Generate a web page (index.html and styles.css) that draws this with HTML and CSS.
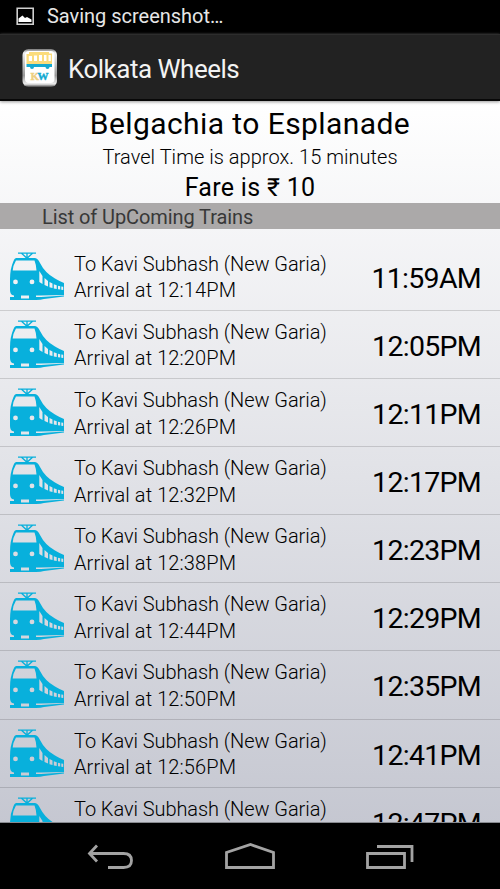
FILE: index.html
```html
<!DOCTYPE html>
<html lang="en">
<head>
<meta charset="utf-8">
<title>Kolkata Wheels</title>
<link rel="stylesheet" href="styles.css">
</head>
<body>
<svg class="defs" aria-hidden="true">
  <symbol id="train" viewBox="0 0 56 50">
    <path d="M8 1.2H26M11.5 1.2L17 6.3L22.5 1.2M17 1.2V6" fill="none" stroke="#08b0dc" stroke-width="1.3"/>
    <path fill="#08b0dc" fill-rule="evenodd" d="M6 6H25Q28 6.500 30 11Q35 21 45 26.500Q50 29.500 54 31V43L30 43.500H4Q0 43 0 38V27Q0 17 3.500 9Q4.300 6.500 6 6ZM6 8.500Q3 13.500 2.700 18.500H26.500Q26.300 13 24.500 8.500ZM5.500 27.500a2.400 2.400 0 1 0 0 4.800a2.400 2.400 0 1 0 0-4.800ZM22 27.500a2.400 2.400 0 1 0 0 4.800a2.400 2.400 0 1 0 0-4.800ZM29.300 19V30L32.500 32V24ZM34.500 26V33L38 34.500V29ZM39.500 30V35.300L42.500 36V31.500ZM43.800 32.300V36.500L46.700 37V33.300ZM48 33.800V37.300L50.200 37.600V34.200ZM51.300 34.500V37.800L53.200 38V34.800Z"/>
    <path fill="#08b0dc" d="M4 43H11V45H4ZM19 43H26V45H19ZM0 45H11V46.500H19V45H31L54 43.500V44.500L34 47Q31 48 26 48H0Z"/>
  </symbol>
</svg>
<div class="status">
  <svg class="status-icon" width="19" height="19" viewBox="0 0 19 19"><path d="M1.200 1.200H17.200V17.200H1.200Z" fill="none" stroke="#d0d0d0" stroke-width="1.600"/><path d="M2.500 15V11.500L6.500 8.500L9 11L11 10L15.500 12.500V15Z" fill="#fff"/></svg>
  <span class="status-text">Saving screenshot…</span>
</div>
<header class="bar">
  <svg class="app-icon" width="36" height="40" viewBox="0 0 36 40">
    <defs>
      <linearGradient id="chrome" x2="0" y2="1"><stop stop-color="#777"/><stop offset=".1" stop-color="#eee"/><stop offset=".7" stop-color="#999"/><stop offset=".92" stop-color="#eee"/><stop offset="1" stop-color="#444"/></linearGradient>
    </defs>
    <rect x=".5" y="1" width="34.500" height="38" rx="6" fill="url(#chrome)"/>
    <rect x="3" y="3" width="29.500" height="32" rx="4" fill="#fff"/>
    <path fill="#fbdc7c" fill-rule="evenodd" d="M7 4H27V5.500H30V16H4.500V6H7ZM6.800 8V13H10V8ZM12 7.500V13H15V7.500ZM17 7V13H20V7ZM22 7V13H24.500V7ZM26.500 7V13H28.800V7Z"/>
    <path fill="#15a9d1" d="M4.500 16H30V19H27.500A2 2 0 0 1 23.500 19H12A2 2 0 0 1 8 19H4.500Z"/>
    <text class="logo-k" x="8.500" y="32">K</text><text class="logo-w" x="15.500" y="32">W</text>
  </svg>
  <h1>Kolkata Wheels</h1>
</header>
<section class="summary">
  <div class="route">Belgachia to Esplanade</div>
  <div class="travel">Travel Time is approx. 15 minutes</div>
  <div class="fare">Fare is ₹ 10</div>
</section>
<div class="list-title"><span>List of UpComing Trains</span></div>
<ul class="trains">
  <li><svg class="train"><use href="#train"/></svg><div class="info"><p class="dest">To Kavi Subhash (New Garia)</p><p class="arr">Arrival at 12:14PM</p></div><time>11:59AM</time></li>
  <li><svg class="train"><use href="#train"/></svg><div class="info"><p class="dest">To Kavi Subhash (New Garia)</p><p class="arr">Arrival at 12:20PM</p></div><time>12:05PM</time></li>
  <li><svg class="train"><use href="#train"/></svg><div class="info"><p class="dest">To Kavi Subhash (New Garia)</p><p class="arr">Arrival at 12:26PM</p></div><time>12:11PM</time></li>
  <li><svg class="train"><use href="#train"/></svg><div class="info"><p class="dest">To Kavi Subhash (New Garia)</p><p class="arr">Arrival at 12:32PM</p></div><time>12:17PM</time></li>
  <li><svg class="train"><use href="#train"/></svg><div class="info"><p class="dest">To Kavi Subhash (New Garia)</p><p class="arr">Arrival at 12:38PM</p></div><time>12:23PM</time></li>
  <li><svg class="train"><use href="#train"/></svg><div class="info"><p class="dest">To Kavi Subhash (New Garia)</p><p class="arr">Arrival at 12:44PM</p></div><time>12:29PM</time></li>
  <li><svg class="train"><use href="#train"/></svg><div class="info"><p class="dest">To Kavi Subhash (New Garia)</p><p class="arr">Arrival at 12:50PM</p></div><time>12:35PM</time></li>
  <li><svg class="train"><use href="#train"/></svg><div class="info"><p class="dest">To Kavi Subhash (New Garia)</p><p class="arr">Arrival at 12:56PM</p></div><time>12:41PM</time></li>
  <li><svg class="train"><use href="#train"/></svg><div class="info"><p class="dest">To Kavi Subhash (New Garia)</p></div><time>12:47PM</time></li>
</ul>
<nav class="nav">
  <svg width="48" height="30" viewBox="0 0 48 30"><path d="M11 2.500L3.500 10.500L11 18.500M4 10.500H37.500Q45.500 10.500 45.500 17.500T37.500 24.500H22" fill="none" stroke="#a3a3a3" stroke-width="2.800"/></svg>
  <svg width="52" height="30" viewBox="0 0 52 30"><path d="M2.500 24.500V9.500L26.500 1.500L49.500 9.500V24.500Z" fill="none" stroke="#a3a3a3" stroke-width="2.800"/></svg>
  <svg width="50" height="30" viewBox="0 0 50 30"><path d="M2.500 10.500H39.500V24.500H2.500ZM12 3.500H47V19" fill="none" stroke="#a3a3a3" stroke-width="2.800"/></svg>
</nav>
</body>
</html>
```
FILE: styles.css
```css
* { box-sizing: border-box; margin: 0; padding: 0; }
body {
  width: 500px; height: 889px; overflow: hidden;
  display: flex; flex-direction: column;
  font-family: Roboto, "Noto Sans", sans-serif; color: #000;
  background: linear-gradient(#fff 100px, #c4c6d0 840px);
  white-space: nowrap;
}
.defs { display: none; }
.status { height: 34px; flex: none; background: #000; display: flex; align-items: center; padding-left: 16px; }
.status-icon { margin-right: 12px; margin-top: -2px; }
.status-text { color: #e6e6e6; font-size: 20px; line-height: 32px; height: 34px; letter-spacing: -.02px; }
.bar { height: 67px; flex: none; background: #222; border-top: 1px solid #2d2d2d; border-bottom: 2px solid #080808; display: flex; align-items: center; padding: 2px 0 0 22px; box-shadow: 0 1px 3px #999; }
.app-icon { margin-right: 10px; }
.logo-k, .logo-w { font: bold 11px "Liberation Serif", serif; fill: #edcf80; stroke: #edcf80; stroke-width: .4px; }
.logo-w { fill: #15a9d1; stroke: #15a9d1; }
h1 { color: #f3f3f3; font-size: 26px; font-weight: 400; letter-spacing: -.5px; line-height: 34px; padding-top: 2px; }
.summary { height: 102px; flex: none; text-align: center; padding-top: 3px; }
.route { font-size: 30px; line-height: 40px; letter-spacing: .42px; }
.travel { font-size: 20px; line-height: 26px; font-weight: 300; letter-spacing: .04px; }
.fare { font-size: 25px; line-height: 35px; letter-spacing: .3px; }
.list-title { height: 26px; flex: none; background: #aba9a9; color: #383838; font-size: 20px; line-height: 28px; padding-left: 42px; letter-spacing: -.09px; }
.trains { list-style: none; flex: 1; min-height: 0; overflow: hidden; padding-top: 14px; border-bottom: 1px solid #888a90; }
.trains li { height: 68.08px; display: flex; border-bottom: 1px solid rgba(0, 0, 0, .14); padding: 8px 19px 0 10px; }
.train { width: 56px; height: 50px; margin-top: 1px; flex: none; }
.info { margin-left: 8px; flex: 1; font-size: 20px; line-height: 26.400px; font-weight: 300; }
.dest { letter-spacing: -.07px; }
.arr { letter-spacing: .1px; }
time { font-size: 28.500px; line-height: 56px; letter-spacing: -.7px; }
.nav { height: 66px; flex: none; background: #000; display: flex; justify-content: space-between; padding: 20px 85px 0 86px; }
```
